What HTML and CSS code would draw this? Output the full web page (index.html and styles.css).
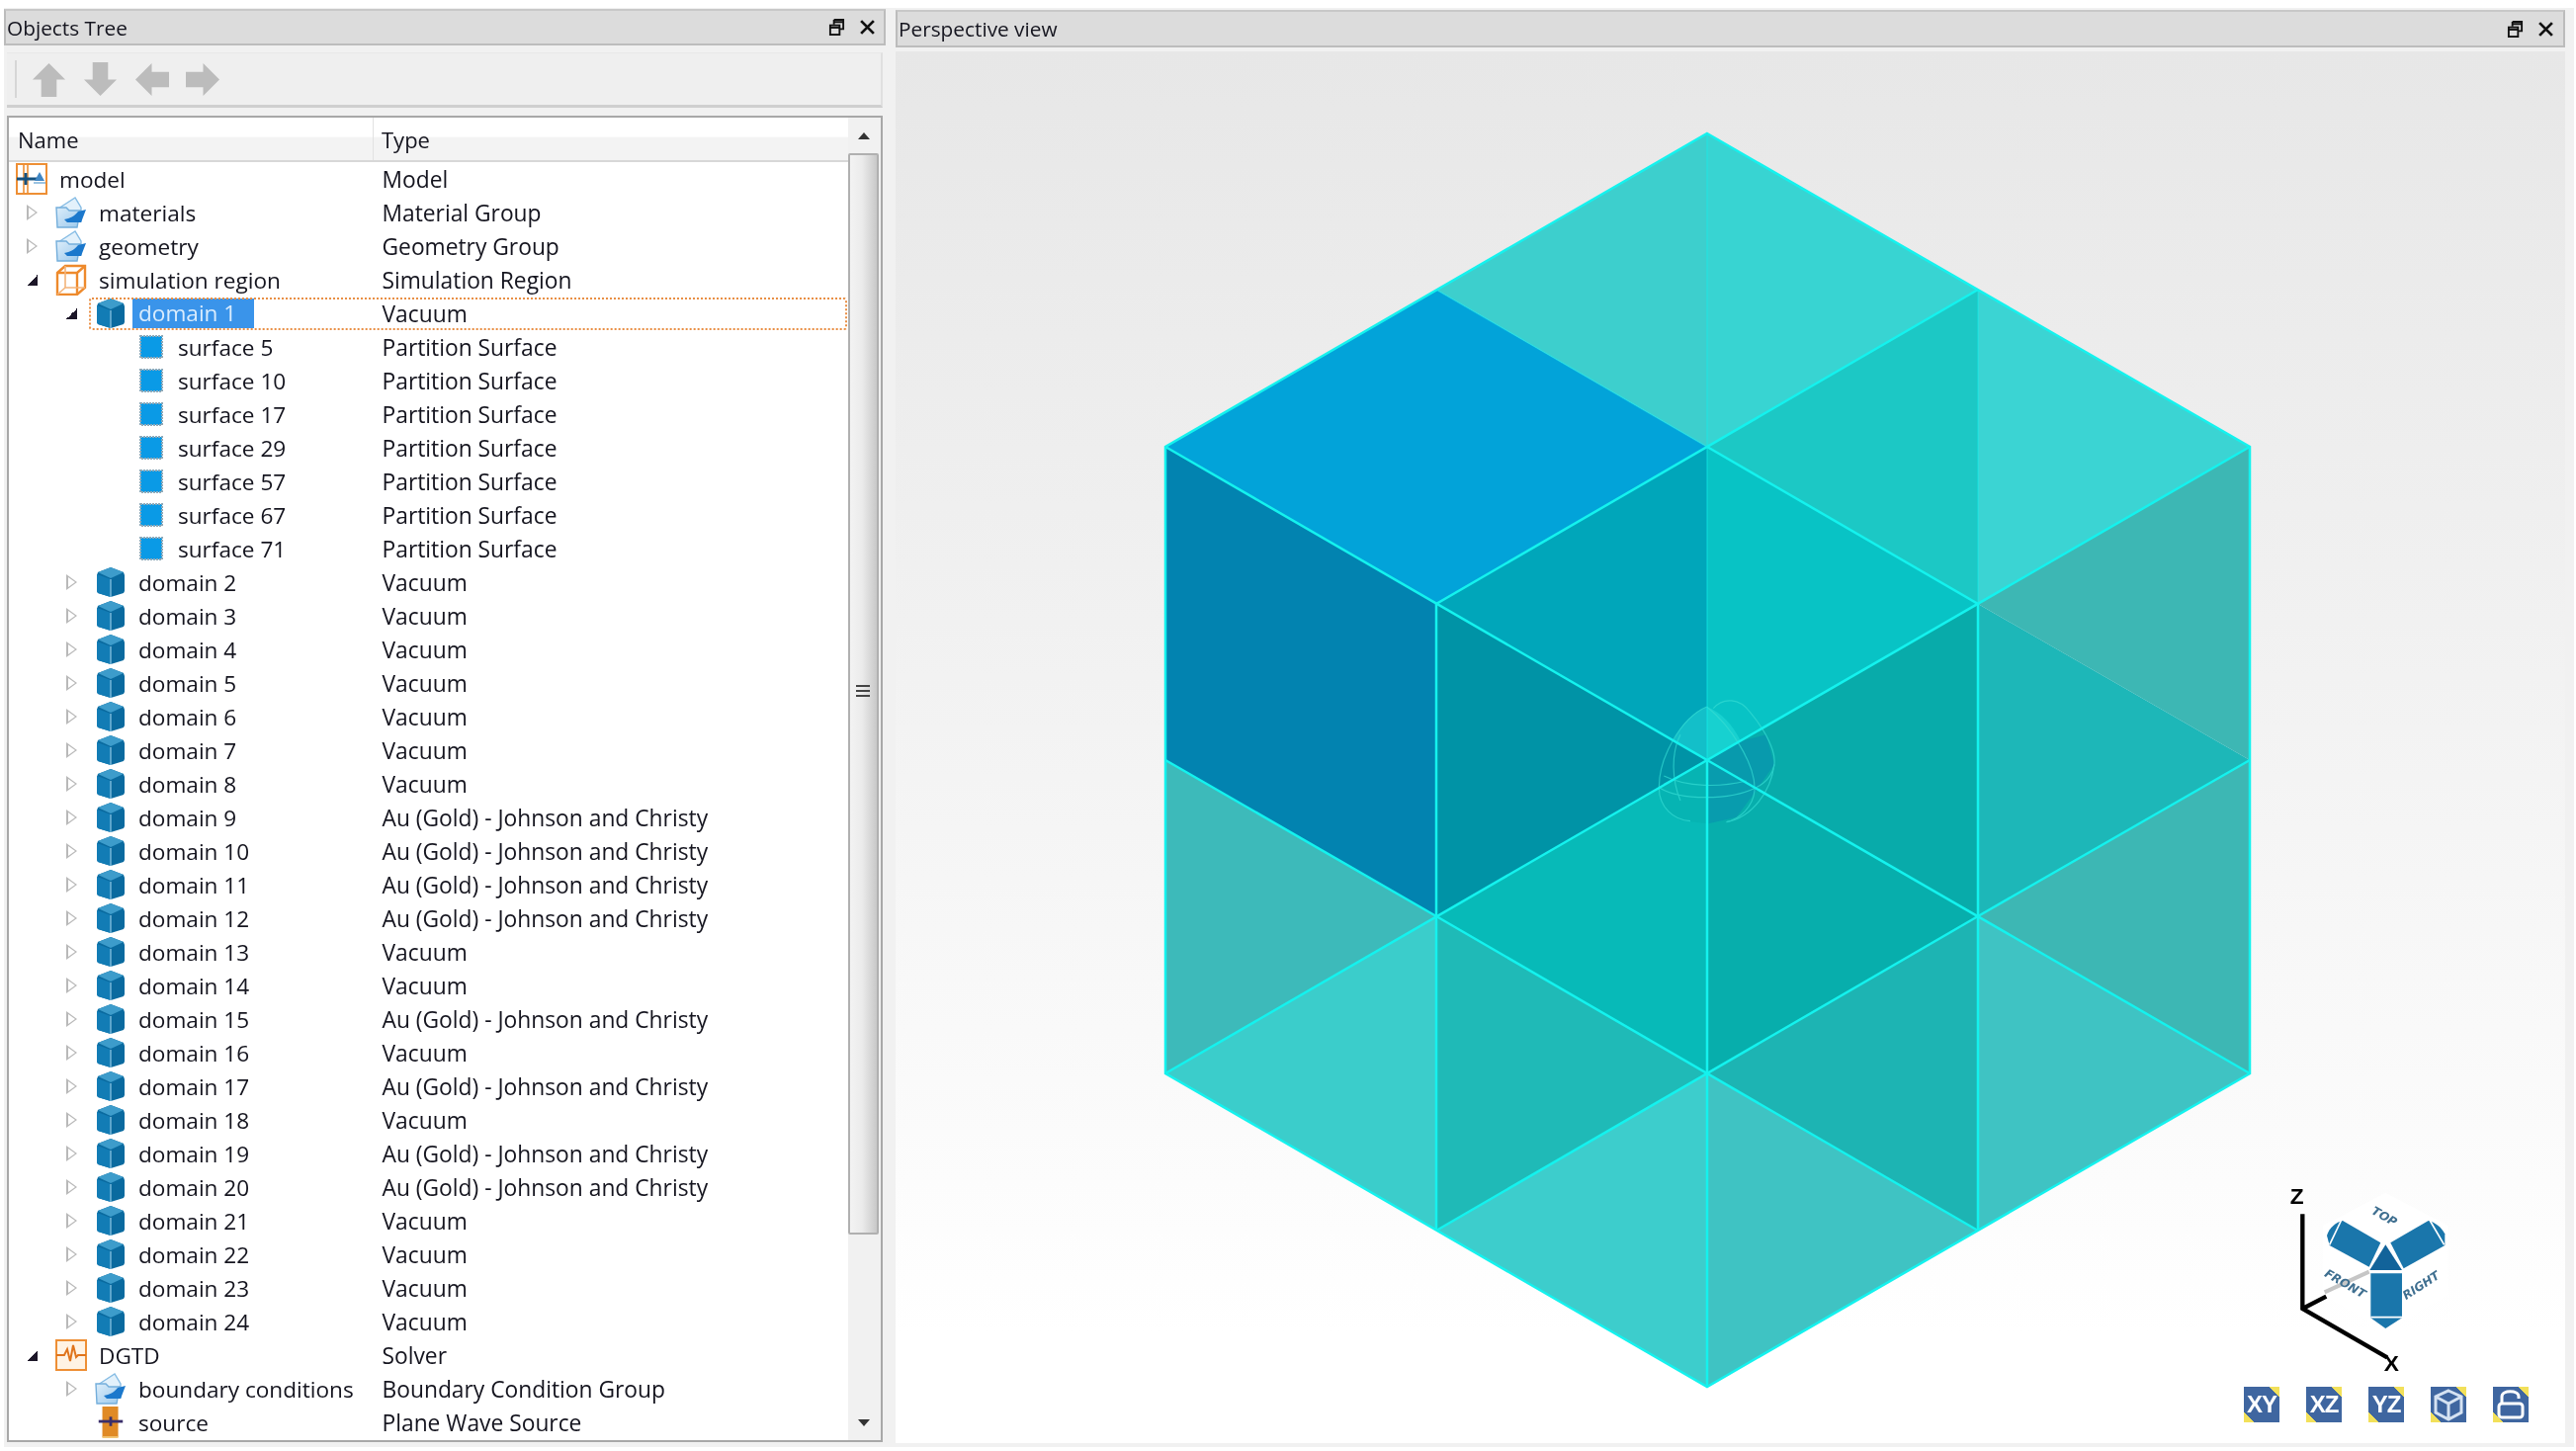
FILE: index.html
```html
<!DOCTYPE html>
<html lang="en">
<head>
    <meta charset="UTF-8">
    <title>Objects Tree - Perspective view</title>
    <link rel="stylesheet" href="styles.css">
</head>
<body>
    <svg class="defs" width="0" height="0">
        <defs>
            <linearGradient id="folderFill" x1="0" y1="0" x2="1" y2="1">
                <stop offset="0" stop-color="#dcedfa"/>
                <stop offset="1" stop-color="#9cc9ec"/>
            </linearGradient>
            <symbol id="i-model" viewBox="0 0 32 32">
                <rect x="1" y="1" width="30" height="30" fill="#fff" stroke="#ee8f35" stroke-width="2"/>
                <path d="M8 1v30M12 1v30" stroke="#ee8f35" stroke-width="1.6" fill="none"/>
                <path d="M1 16h20" stroke="#15517f" stroke-width="3"/>
                <path d="M10 10v12" stroke="#15517f" stroke-width="3"/>
                <path d="M24 9l5 9h-10z" fill="#3f86c4"/>
                <path d="M18 20h12" stroke="#9cc3e2" stroke-width="2"/>
            </symbol>
            <symbol id="i-folder" viewBox="0 0 32 32">
                <path d="M3 12L20 1l6 10v14H3z" fill="#e3f1fb" stroke="#86bce4" stroke-width="1.4"/>
                <path d="M1 11h10l3 3h11l-3 17H2z" fill="url(#folderFill)" stroke="#74aedb" stroke-width="1.4"/>
                <path d="M9 23c6-1 10-3 14-8l8-2-5 13H12z" fill="#1b78cc"/>
            </symbol>
            <symbol id="i-region" viewBox="0 0 32 32">
                <path d="M2 9l8-7h20v22l-8 7H2z" fill="#fff" stroke="#ee8a2c" stroke-width="2.4"/>
                <path d="M2 9h20v22M22 9l8-7" fill="none" stroke="#ee8a2c" stroke-width="2.4"/>
                <path d="M10 2v22H30M10 24l-8 7" fill="none" stroke="#f3b47a" stroke-width="1.6"/>
            </symbol>
            <symbol id="i-domain" viewBox="0 0 30 32">
                <path d="M15 1l13 5 1 3v16l-1 2-13 4-13-4-1-2V9l1-3z" fill="#0a6a9f"/>
                <path d="M15 1l13 5-13 6L2 6z" fill="#3d9ccb"/>
                <path d="M1 8l14 5v18L2 27l-1-2z" fill="#127cb5"/>
                <path d="M15 13v18" stroke="#8fc7e3" stroke-width="1.2"/>
            </symbol>
            <symbol id="i-surface" viewBox="0 0 24 24">
                <rect x="1" y="1" width="22" height="22" fill="#0a9ae6" stroke="#8fa9b8" stroke-width="2" stroke-dasharray="2 1"/>
            </symbol>
            <symbol id="i-solver" viewBox="0 0 32 32">
                <rect x="1" y="1" width="30" height="30" fill="#fff3e4" stroke="#ee8f35" stroke-width="2"/>
                <path d="M1 16h8l3-6 3 12 3-16 3 12 2-2h8" fill="none" stroke="#e0741c" stroke-width="2"/>
            </symbol>
            <symbol id="i-source" viewBox="0 0 32 34">
                <rect x="7" y="0" width="17" height="33" fill="#e08a25"/>
                <path d="M7 33h17" stroke="#f2c777" stroke-width="2"/>
                <path d="M3 16h26" stroke="#3a2f6b" stroke-width="3"/>
                <path d="M16 11v10" stroke="#3a2f6b" stroke-width="3"/>
            </symbol>
        </defs>
    </svg>

    <div class="app">
        <section class="tree-panel">
            <header class="dock-title">
                <span>Objects Tree</span>
                <div class="dock-buttons">
                    <svg class="dock-icon" viewBox="0 0 16 18"><path d="M5 1h10v10h-4M5 1v5M5 3.5h10" fill="none" stroke="#111" stroke-width="2"/><rect x="1" y="7" width="10" height="10" fill="none" stroke="#111" stroke-width="2"/><path d="M1 9.5h10" stroke="#111" stroke-width="2"/></svg>
                    <svg class="dock-icon" viewBox="0 0 16 16"><path d="M2 2l12 12M14 2L2 14" stroke="#111" stroke-width="2.6"/></svg>
                </div>
            </header>

            <div class="toolbar">
                <div class="toolbar-sep"></div>
                <svg class="tool" viewBox="0 0 36 36"><path d="M18 1L35 18H26V36H10V18H1z"/></svg>
                <svg class="tool" viewBox="0 0 36 36"><path d="M18 35L35 18H26V0H10V18H1z"/></svg>
                <svg class="tool" viewBox="0 0 36 36"><path d="M1 18L18 1V10H36V26H18V35z"/></svg>
                <svg class="tool" viewBox="0 0 36 36"><path d="M35 18L18 1V10H0V26H18V35z"/></svg>
            </div>

            <div class="tree">
                <div class="tree-main">
                    <div class="tree-head">
                        <div class="head-name">Name</div>
                        <div class="head-type">Type</div>
                    </div>

                    <div class="row"><div class="cell lvl-0"><svg class="ico"><use href="#i-model"/></svg><span class="name">model</span></div><div class="type">Model</div></div>
                    <div class="row"><div class="cell lvl-1"><span class="exp"></span><svg class="ico"><use href="#i-folder"/></svg><span class="name">materials</span></div><div class="type">Material Group</div></div>
                    <div class="row"><div class="cell lvl-1"><span class="exp"></span><svg class="ico"><use href="#i-folder"/></svg><span class="name">geometry</span></div><div class="type">Geometry Group</div></div>
                    <div class="row"><div class="cell lvl-1"><span class="exp open"></span><svg class="ico"><use href="#i-region"/></svg><span class="name">simulation region</span></div><div class="type">Simulation Region</div></div>
                    <div class="row sel"><div class="cell lvl-2"><span class="exp open"></span><svg class="ico"><use href="#i-domain"/></svg><span class="name">domain 1</span></div><div class="type">Vacuum</div></div>
                    <div class="row"><div class="cell lvl-3"><svg class="ico-surface"><use href="#i-surface"/></svg><span class="name">surface 5</span></div><div class="type">Partition Surface</div></div>
                    <div class="row"><div class="cell lvl-3"><svg class="ico-surface"><use href="#i-surface"/></svg><span class="name">surface 10</span></div><div class="type">Partition Surface</div></div>
                    <div class="row"><div class="cell lvl-3"><svg class="ico-surface"><use href="#i-surface"/></svg><span class="name">surface 17</span></div><div class="type">Partition Surface</div></div>
                    <div class="row"><div class="cell lvl-3"><svg class="ico-surface"><use href="#i-surface"/></svg><span class="name">surface 29</span></div><div class="type">Partition Surface</div></div>
                    <div class="row"><div class="cell lvl-3"><svg class="ico-surface"><use href="#i-surface"/></svg><span class="name">surface 57</span></div><div class="type">Partition Surface</div></div>
                    <div class="row"><div class="cell lvl-3"><svg class="ico-surface"><use href="#i-surface"/></svg><span class="name">surface 67</span></div><div class="type">Partition Surface</div></div>
                    <div class="row"><div class="cell lvl-3"><svg class="ico-surface"><use href="#i-surface"/></svg><span class="name">surface 71</span></div><div class="type">Partition Surface</div></div>
                    <div class="row"><div class="cell lvl-2"><span class="exp"></span><svg class="ico"><use href="#i-domain"/></svg><span class="name">domain 2</span></div><div class="type">Vacuum</div></div>
                    <div class="row"><div class="cell lvl-2"><span class="exp"></span><svg class="ico"><use href="#i-domain"/></svg><span class="name">domain 3</span></div><div class="type">Vacuum</div></div>
                    <div class="row"><div class="cell lvl-2"><span class="exp"></span><svg class="ico"><use href="#i-domain"/></svg><span class="name">domain 4</span></div><div class="type">Vacuum</div></div>
                    <div class="row"><div class="cell lvl-2"><span class="exp"></span><svg class="ico"><use href="#i-domain"/></svg><span class="name">domain 5</span></div><div class="type">Vacuum</div></div>
                    <div class="row"><div class="cell lvl-2"><span class="exp"></span><svg class="ico"><use href="#i-domain"/></svg><span class="name">domain 6</span></div><div class="type">Vacuum</div></div>
                    <div class="row"><div class="cell lvl-2"><span class="exp"></span><svg class="ico"><use href="#i-domain"/></svg><span class="name">domain 7</span></div><div class="type">Vacuum</div></div>
                    <div class="row"><div class="cell lvl-2"><span class="exp"></span><svg class="ico"><use href="#i-domain"/></svg><span class="name">domain 8</span></div><div class="type">Vacuum</div></div>
                    <div class="row"><div class="cell lvl-2"><span class="exp"></span><svg class="ico"><use href="#i-domain"/></svg><span class="name">domain 9</span></div><div class="type">Au (Gold) - Johnson and Christy</div></div>
                    <div class="row"><div class="cell lvl-2"><span class="exp"></span><svg class="ico"><use href="#i-domain"/></svg><span class="name">domain 10</span></div><div class="type">Au (Gold) - Johnson and Christy</div></div>
                    <div class="row"><div class="cell lvl-2"><span class="exp"></span><svg class="ico"><use href="#i-domain"/></svg><span class="name">domain 11</span></div><div class="type">Au (Gold) - Johnson and Christy</div></div>
                    <div class="row"><div class="cell lvl-2"><span class="exp"></span><svg class="ico"><use href="#i-domain"/></svg><span class="name">domain 12</span></div><div class="type">Au (Gold) - Johnson and Christy</div></div>
                    <div class="row"><div class="cell lvl-2"><span class="exp"></span><svg class="ico"><use href="#i-domain"/></svg><span class="name">domain 13</span></div><div class="type">Vacuum</div></div>
                    <div class="row"><div class="cell lvl-2"><span class="exp"></span><svg class="ico"><use href="#i-domain"/></svg><span class="name">domain 14</span></div><div class="type">Vacuum</div></div>
                    <div class="row"><div class="cell lvl-2"><span class="exp"></span><svg class="ico"><use href="#i-domain"/></svg><span class="name">domain 15</span></div><div class="type">Au (Gold) - Johnson and Christy</div></div>
                    <div class="row"><div class="cell lvl-2"><span class="exp"></span><svg class="ico"><use href="#i-domain"/></svg><span class="name">domain 16</span></div><div class="type">Vacuum</div></div>
                    <div class="row"><div class="cell lvl-2"><span class="exp"></span><svg class="ico"><use href="#i-domain"/></svg><span class="name">domain 17</span></div><div class="type">Au (Gold) - Johnson and Christy</div></div>
                    <div class="row"><div class="cell lvl-2"><span class="exp"></span><svg class="ico"><use href="#i-domain"/></svg><span class="name">domain 18</span></div><div class="type">Vacuum</div></div>
                    <div class="row"><div class="cell lvl-2"><span class="exp"></span><svg class="ico"><use href="#i-domain"/></svg><span class="name">domain 19</span></div><div class="type">Au (Gold) - Johnson and Christy</div></div>
                    <div class="row"><div class="cell lvl-2"><span class="exp"></span><svg class="ico"><use href="#i-domain"/></svg><span class="name">domain 20</span></div><div class="type">Au (Gold) - Johnson and Christy</div></div>
                    <div class="row"><div class="cell lvl-2"><span class="exp"></span><svg class="ico"><use href="#i-domain"/></svg><span class="name">domain 21</span></div><div class="type">Vacuum</div></div>
                    <div class="row"><div class="cell lvl-2"><span class="exp"></span><svg class="ico"><use href="#i-domain"/></svg><span class="name">domain 22</span></div><div class="type">Vacuum</div></div>
                    <div class="row"><div class="cell lvl-2"><span class="exp"></span><svg class="ico"><use href="#i-domain"/></svg><span class="name">domain 23</span></div><div class="type">Vacuum</div></div>
                    <div class="row"><div class="cell lvl-2"><span class="exp"></span><svg class="ico"><use href="#i-domain"/></svg><span class="name">domain 24</span></div><div class="type">Vacuum</div></div>
                    <div class="row"><div class="cell lvl-1"><span class="exp open"></span><svg class="ico"><use href="#i-solver"/></svg><span class="name">DGTD</span></div><div class="type">Solver</div></div>
                    <div class="row"><div class="cell lvl-2"><span class="exp"></span><svg class="ico"><use href="#i-folder"/></svg><span class="name">boundary conditions</span></div><div class="type">Boundary Condition Group</div></div>
                    <div class="row"><div class="cell lvl-2"><span class="exp none"></span><svg class="ico"><use href="#i-source"/></svg><span class="name">source</span></div><div class="type">Plane Wave Source</div></div>
                </div>

                <div class="scrollbar">
                    <div class="scroll-btn"><span class="scroll-up"></span></div>
                    <div class="scroll-thumb"><span class="grip"></span></div>
                    <div class="scroll-track"></div>
                    <div class="scroll-btn"><span class="scroll-down"></span></div>
                </div>
            </div>
        </section>

        <section class="view-panel">
            <header class="dock-title view-title">
                <span>Perspective view</span>
                <div class="dock-buttons">
                    <svg class="dock-icon" viewBox="0 0 16 18"><path d="M5 1h10v10h-4M5 1v5M5 3.5h10" fill="none" stroke="#111" stroke-width="2"/><rect x="1" y="7" width="10" height="10" fill="none" stroke="#111" stroke-width="2"/><path d="M1 9.5h10" stroke="#111" stroke-width="2"/></svg>
                    <svg class="dock-icon" viewBox="0 0 16 16"><path d="M2 2l12 12M14 2L2 14" stroke="#111" stroke-width="2.6"/></svg>
                </div>
            </header>

            <div class="viewport">
                <!-- viewBox is in page pixels so the vertices read straight off the screenshot -->
                <svg class="scene" viewBox="908 52 1685 1408">
                    <g class="faces">
                        <polygon fill="#3dcfcd" points="1727,135 1453,293 1727,452"/>
                        <polygon fill="#38d4d2" points="1727,135 2001,293 1727,452"/>
                        <polygon fill="#02a3d9" points="1453,293 1179,452 1453,611 1727,452"/>
                        <polygon fill="#00a6ba" points="1727,452 1453,611 1727,769"/>
                        <polygon fill="#0283b0" points="1179,452 1179,769 1453,927 1453,611"/>
                        <polygon fill="#0093a6" points="1453,611 1453,927 1727,769"/>
                        <polygon fill="#3dbaba" points="1179,769 1179,1086 1453,927"/>
                        <polygon fill="#3bcdcb" points="1179,1086 1453,1245 1453,927"/>
                        <polygon fill="#07bab8" points="1453,927 1727,769 1727,1086"/>
                        <polygon fill="#1fbab7" points="1453,927 1727,1086 1453,1245"/>
                        <polygon fill="#3dcdcc" points="1453,1245 1727,1086 1727,1403"/>
                        <polygon fill="#08c3c5" points="1727,452 2001,611 1727,769"/>
                        <polygon fill="#1cc8c5" points="1727,452 2001,293 2001,611"/>
                        <polygon fill="#3bd4d3" points="2001,293 2276,452 2001,611"/>
                        <polygon fill="#07aeac" points="1727,769 2001,927 1727,1086"/>
                        <polygon fill="#08abaa" points="1727,769 2001,611 2001,927"/>
                        <polygon fill="#3db7b4" points="2001,611 2276,452 2276,769"/>
                        <polygon fill="#1db7b8" points="2001,611 2276,769 2001,927"/>
                        <polygon fill="#3db7b4" points="2001,927 2276,769 2276,1086"/>
                        <polygon fill="#3fc3c3" points="2001,927 2276,1086 2001,1245"/>
                        <polygon fill="#1db4b3" points="1727,1086 2001,927 2001,1245"/>
                        <polygon fill="#3fc3c3" points="1727,1086 2001,1245 1727,1403"/>
                    </g>

                    <!-- the small sphere at the centre, drawn 3x -->
                    <g transform="translate(1600 660) scale(.3333)">
                        <path d="M385 330L480 270 560 250 585 340 530 420 470 500 385 520z" fill="#0a7eb4" opacity=".38"/>
                        <path d="M380 165C340 180 300 220 278 270L380 325 482 268C460 220 420 180 380 165z" fill="#30e6e0" opacity=".4"/>
                        <path d="M235 410L385 330V520L300 510C260 490 235 450 235 410z" fill="#06a8a8" opacity=".35"/>
                        <g fill="none" stroke="#35dcd4" stroke-width="3.5" opacity=".7">
                            <path d="M380 165C300 200 235 320 235 410 235 470 280 510 330 512"/>
                            <path d="M400 170C430 135 480 140 510 180 560 240 590 300 585 340 575 420 520 500 440 515"/>
                            <path d="M380 165C450 220 530 340 525 420 520 470 480 505 440 515"/>
                            <path d="M235 410C300 450 450 450 530 410 560 395 580 370 585 340"/>
                            <path d="M300 250C270 310 275 390 300 450"/>
                            <path d="M250 375C320 410 420 410 500 390"/>
                            <path d="M250 400L370 335"/>
                        </g>
                    </g>

                    <g class="edges">
                        <polygon points="1727,135 2276,452 2276,1086 1727,1403 1179,1086 1179,452"/>
                        <path d="M1179 1086L1727 769 2276 452"/>
                        <path d="M1179 452L1727 769 2276 1086"/>
                        <path d="M2001 293L1453 611V1245"/>
                        <path d="M1727 452L2001 611V1245"/>
                        <path d="M1179 769L1453 927 2001 1245"/>
                        <path d="M2276 769L2001 927 1453 1245"/>
                        <path d="M1727 769V1403"/>
                        <path class="edge-faint" d="M1727 135V769"/>
                        <path class="edge-faint" d="M2001 293V611"/>
                        <path class="edge-faint" d="M1453 293L1727 452"/>
                    </g>

                    <!-- orientation gizmo, drawn 3x -->
                    <g transform="translate(2250 1170) scale(.3333)">
                        <path d="M490 110L680 210V420L490 530 300 420V210z" fill="#fff" opacity=".9"/>
                        <path d="M305 412L440 350" stroke="#c6c6c6" stroke-width="12"/>
                        <path d="M238 175V462L495 610M238 462L310 425" fill="none" stroke="#000" stroke-width="13"/>
                        <text class="axis-label" x="200" y="143">Z</text>
                        <text class="axis-label" x="485" y="650">X</text>
                        <path d="M360 195L475 262 440 335 320 270 312 240C320 215 340 200 360 195z" fill="#1a76ab"/>
                        <path d="M620 195L505 262 545 340 670 270V235C660 215 640 200 620 195z" fill="#1a76ab"/>
                        <path d="M445 355H540V490L490 522 445 490z" fill="#1a76ab"/>
                        <path d="M490 268L442 345H540z" fill="#12639a"/>
                        <path d="M355 195L320 268M625 195L668 268M445 488H540" stroke="#fff" stroke-width="5" fill="none"/>
                        <text class="gizmo-label" transform="translate(445 172) rotate(30)">TOP</text>
                        <text class="gizmo-label" transform="translate(302 362) rotate(30)">FRONT</text>
                        <text class="gizmo-label" transform="translate(552 436) rotate(-33)">RIGHT</text>
                    </g>
                </svg>

                <div class="view-buttons">
                    <div class="view-btn">XY</div>
                    <div class="view-btn">XZ</div>
                    <div class="view-btn">YZ</div>
                    <div class="view-btn"><svg viewBox="0 0 36 36"><path d="M18 4l13 6v16l-13 7-13-7V10zM5 10l13 7 13-7M18 17v16" fill="none" stroke="#d5e2f2" stroke-width="3"/></svg></div>
                    <div class="view-btn"><svg viewBox="0 0 36 36"><path d="M9 16V10c0-7 17-7 17 0v2" fill="none" stroke="#fff" stroke-width="3"/><rect x="6" y="17" width="24" height="14" rx="3" fill="none" stroke="#fff" stroke-width="3"/></svg></div>
                </div>
            </div>
        </section>
    </div>
</body>
</html>
```

FILE: styles.css
```css
* {
    margin: 0;
    padding: 0;
    box-sizing: border-box;
}

html, body {
    width: 2606px;
    height: 1468px;
    overflow: hidden;
}

body {
    background-color: #fff;
    font-family: "Open Sans", "Noto Sans", sans-serif;
    font-size: 22px;
    color: #15151f;
}

.defs {
    position: absolute;
}

.app {
    display: flex;
    gap: 10px;
    width: 2600px;
    height: 1456px;
    margin: 8px 0 0 4px;
    padding: 1px 9px 0 0;
    background-color: #f1f1f1;
    filter: blur(0.7px);
}

/* dock title bars */
.dock-title {
    display: flex;
    align-items: center;
    justify-content: space-between;
    height: 37px;
    padding: 0 8px 0 1px;
    background-color: #dcdcdc;
    border: 2px solid #bcbcbc;
    border-top-color: #c8c8c8;
    font-size: 20.8px;
}

.dock-buttons {
    display: flex;
    align-items: center;
    gap: 14px;
}

.dock-icon {
    width: 17px;
    height: 17px;
}

/* left panel */
.tree-panel {
    display: flex;
    flex-direction: column;
    width: 892px;
    height: 100%;
}

.toolbar {
    display: flex;
    align-items: center;
    height: 56px;
    margin: 7px 3px 0 3px;
    padding-left: 8px;
    background-color: #efefef;
    border-right: 2px solid #e0e0e0;
    border-bottom: 3px solid #cfcfcf;
    border-top: 1px solid #e8e8e8;
}

.toolbar-sep {
    width: 2px;
    height: 38px;
    margin-right: 15px;
    background-color: #d6d6d6;
}

.tool {
    width: 35px;
    height: 35px;
    margin-right: 17px;
    fill: #bcbcbc;
}

.tree {
    display: flex;
    height: 1342px;
    margin: 8px 3px 0 3px;
    background-color: #fff;
    border: 2px solid #a8a8a8;
    overflow: hidden;
}

.tree-main {
    flex: 1;
    min-width: 0;
}

.tree-head {
    display: flex;
    height: 45px;
    align-items: center;
    background: linear-gradient(#fff, #fff 45%, #f3f3f3 46%, #f3f3f3);
    border-bottom: 2px solid #d8d8d8;
}

.head-name {
    width: 369px;
    padding-left: 9px;
    height: 100%;
    line-height: 45px;
    border-right: 1px solid #e2e2e2;
}

.head-type {
    padding-left: 8px;
}

.row {
    position: relative;
    display: flex;
    align-items: center;
    height: 34px;
}

.cell {
    display: flex;
    align-items: center;
    width: 377.5px;
    flex-shrink: 0;
    white-space: nowrap;
    font-size: 22.6px;
}

.lvl-0 { padding-left: 7px; }
.lvl-1 { padding-left: 18px; }
.lvl-2 { padding-left: 58px; }
.lvl-3 { padding-left: 132px; }

.exp {
    width: 0;
    height: 0;
    margin-right: 18px;
    border-left: 11px solid #b9b9b9;
    border-top: 8px solid transparent;
    border-bottom: 8px solid transparent;
    position: relative;
}

.exp::after {
    content: "";
    position: absolute;
    left: -9px;
    top: -5px;
    border-left: 7px solid #fff;
    border-top: 5px solid transparent;
    border-bottom: 5px solid transparent;
}

.exp.open {
    width: 11px;
    height: 11px;
    border: 0;
    background: linear-gradient(135deg, transparent 50%, #1c1628 50%);
}

.exp.open::after {
    display: none;
}

.exp.none {
    border-left-color: transparent;
}

.exp.none::after {
    display: none;
}

.ico {
    width: 32px;
    height: 32px;
    margin-right: 12px;
    flex-shrink: 0;
}

.ico-surface {
    width: 24px;
    height: 24px;
    margin-right: 15px;
    flex-shrink: 0;
}

.type {
    white-space: nowrap;
    font-size: 22.8px;
}

.sel .name {
    margin-left: -6px;
    padding: 0 6px;
    width: 123px;
    height: 30px;
    line-height: 30px;
    background-color: #3a94ea;
    color: #d9ecfd;
}

.sel::after {
    content: "";
    position: absolute;
    left: 81px;
    right: 1px;
    top: 1px;
    bottom: 0;
    border: 2px dotted #e98f45;
    border-radius: 3px;
}

/* scrollbar */
.scrollbar {
    display: flex;
    flex-direction: column;
    width: 33px;
    padding-right: 2px;
    background-color: #f1f1f1;
}

.scroll-btn {
    display: flex;
    align-items: center;
    justify-content: center;
    height: 36px;
}

.scroll-up, .scroll-down {
    width: 0;
    height: 0;
    border-left: 6px solid transparent;
    border-right: 6px solid transparent;
}

.scroll-up {
    border-bottom: 7px solid #333;
}

.scroll-down {
    border-top: 7px solid #333;
}

.scroll-thumb {
    height: 1094px;
    padding-top: 536px;
    background: linear-gradient(90deg, #f3f3f3, #ebebeb 45%, #c8c8c8);
    border: 2px solid #b0b0b0;
    border-radius: 2px;
}

.grip {
    display: block;
    width: 14px;
    height: 12px;
    margin-left: 6px;
    border-top: 2px solid #444;
    border-bottom: 2px solid #444;
    background: linear-gradient(#444, #444) center / 100% 2px no-repeat;
}

.scroll-track {
    flex: 1;
}

/* right panel */
.view-panel {
    display: flex;
    flex-direction: column;
    flex: 1;
    min-width: 0;
}

.view-title {
    height: 38px;
    margin-top: 1px;
    padding-left: 1px;
    padding-right: 9px;
}

.viewport {
    position: relative;
    height: 1408px;
    margin-top: 4px;
    background: linear-gradient(#e7e7e7, #f2f2f2 45%, #fff 92%);
    overflow: hidden;
}

.scene {
    display: block;
    width: 100%;
    height: 100%;
}

.edges {
    fill: none;
    stroke: #14f2ee;
    stroke-width: 2.5;
}

.edges .edge-faint {
    stroke-width: 1.5;
    stroke-opacity: 0.45;
}

.axis-label {
    font-family: "Liberation Sans", sans-serif;
    font-size: 68px;
    font-weight: 700;
    fill: #000;
}

.gizmo-label {
    font-family: "DejaVu Sans", sans-serif;
    font-size: 36px;
    font-weight: 700;
    font-style: italic;
    fill: #3f6f90;
}

.view-buttons {
    position: absolute;
    right: 37px;
    top: 1351px;
    display: flex;
    gap: 27px;
}

.view-btn {
    display: flex;
    align-items: center;
    justify-content: center;
    width: 36px;
    height: 36px;
    background:
        linear-gradient(45deg, #f2e05a 14%, transparent 14%),
        linear-gradient(225deg, #f2e05a 14%, transparent 14%),
        #3f66a0;
    color: #fff;
    font-family: "Liberation Sans", sans-serif;
    font-weight: 700;
    font-size: 24px;
    letter-spacing: -1px;
}

.view-btn svg {
    width: 36px;
    height: 36px;
}
```
